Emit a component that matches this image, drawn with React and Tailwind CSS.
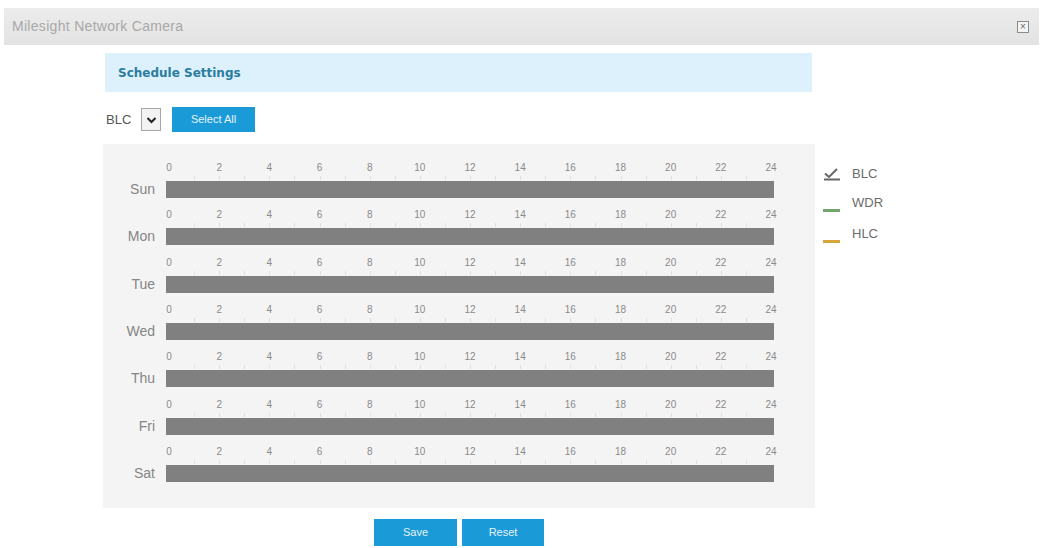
import React from "react";

const days = ["Sun", "Mon", "Tue", "Wed", "Thu", "Fri", "Sat"];
const labels = [0, 2, 4, 6, 8, 10, 12, 14, 16, 18, 20, 22, 24];
const BAR_W = 608;

function DayRow({ day }) {
  return (
    <div className="flex h-[47.33px]">
      <div className="w-[63px] flex flex-col justify-end">
        <div className="h-[17px] mb-[10.33px] flex items-center justify-end pr-[11px] text-[14px] text-[#858585]">
          {day}
        </div>
      </div>
      <div className="flex flex-col" style={{ width: BAR_W }}>
        <div className="relative h-[20px]">
          {labels.map((l) => (
            <span
              key={l}
              className="absolute top-[1px] -translate-x-1/2 text-[10px] leading-[12px] text-[#8a8a8a]"
              style={{ left: 3 + (l / 24) * (BAR_W - 6) }}
            >
              {l}
            </span>
          ))}
          {Array.from({ length: 23 }, (_, i) => i + 1).map((h) => (
            <span
              key={h}
              className="absolute bottom-[1px] w-px h-[4px] bg-[#e0e0e0]"
              style={{ left: 3 + (h / 24) * (BAR_W - 6) }}
            />
          ))}
        </div>
        <div className="h-[17px] bg-[#808080]" />
      </div>
    </div>
  );
}

export default function App() {
  return (
    <div
      className="w-[1043px] h-[548px] bg-white overflow-hidden"
      style={{ fontFamily: '"Liberation Sans", Arial, sans-serif' }}
    >
      {/* Title bar */}
      <div className="mt-[8px] mx-[4px] h-[37px] bg-gradient-to-b from-[#ececec] to-[#e3e3e3] flex items-center justify-between pl-[8px] pr-[10px]">
        <span className="text-[14px] tracking-[0.3px] text-[#a8a8a8]">Milesight Network Camera</span>
        <span className="w-[12px] h-[12px] border border-[#8a8a8a] flex items-center justify-center text-[10px] leading-none text-[#666] bg-[#f4f4f4]">
          ×
        </span>
      </div>

      {/* Schedule Settings header */}
      <div className="ml-[105px] mt-[8px] w-[707px] h-[39px] bg-[#dcf1fb] flex items-center pl-[13px]">
        <span
          className="text-[12px] font-bold text-[#2a7c9f]"
          style={{ fontFamily: '"DejaVu Sans", Verdana, sans-serif' }}
        >
          Schedule Settings
        </span>
      </div>

      {/* Select row */}
      <div className="ml-[105px] mt-[15px] flex items-center h-[25px]">
        <div className="h-[24px] w-[36px] bg-white flex items-center pl-[1px] text-[13px] text-[#555]">
          BLC
        </div>
        <div className="h-[23px] w-[20px] border border-[#a6a6a6] bg-[#f3f3f3] flex items-center justify-center">
          <svg width="11" height="8" viewBox="0 0 11 8">
            <path d="M1.5 2 L5.5 6 L9.5 2" fill="none" stroke="#222" strokeWidth="2" />
          </svg>
        </div>
        <div className="ml-[11px] h-[25px] w-[83px] bg-[#1b9ad8] flex items-center justify-center text-[11px] text-[#e6f4fb]">
          Select All
        </div>
      </div>

      {/* Grid + legend */}
      <div className="flex mt-[12px]">
        <div className="ml-[103px] w-[712px] h-[364px] bg-[#f4f4f4] pt-[17px]">
          {days.map((d) => (
            <DayRow key={d} day={d} />
          ))}
        </div>
        <div className="ml-[8px] pt-[22px] flex flex-col text-[13px] text-[#6b6b6b]">
          <div className="flex items-center h-[16px]">
            <svg width="18" height="14" viewBox="0 0 18 14" className="mr-[11px]">
              <path d="M2 6.5 L6 10 L14 2" fill="none" stroke="#666" strokeWidth="2" />
              <rect x="1" y="11.5" width="16" height="2" fill="#666" />
            </svg>
            BLC
          </div>
          <div className="flex items-center h-[16px] mt-[15px]">
            <span className="w-[17px] h-[3px] bg-[#6fa86a] mr-[12px] mt-[10px]" />
            <span className="-mt-[4px]">WDR</span>
          </div>
          <div className="flex items-center h-[16px] mt-[15px]">
            <span className="w-[17px] h-[3px] bg-[#d6a63a] mr-[12px] mt-[10px]" />
            <span className="-mt-[4px]">HLC</span>
          </div>
        </div>
      </div>

      {/* Buttons */}
      <div className="mt-[11px] ml-[374px] flex gap-[5px]">
        <div className="h-[27px] w-[83px] bg-[#1b9ad8] flex items-center justify-center text-[11px] text-[#e6f4fb]">
          Save
        </div>
        <div className="h-[27px] w-[82px] bg-[#1b9ad8] flex items-center justify-center text-[11px] text-[#e6f4fb]">
          Reset
        </div>
      </div>
    </div>
  );
}
